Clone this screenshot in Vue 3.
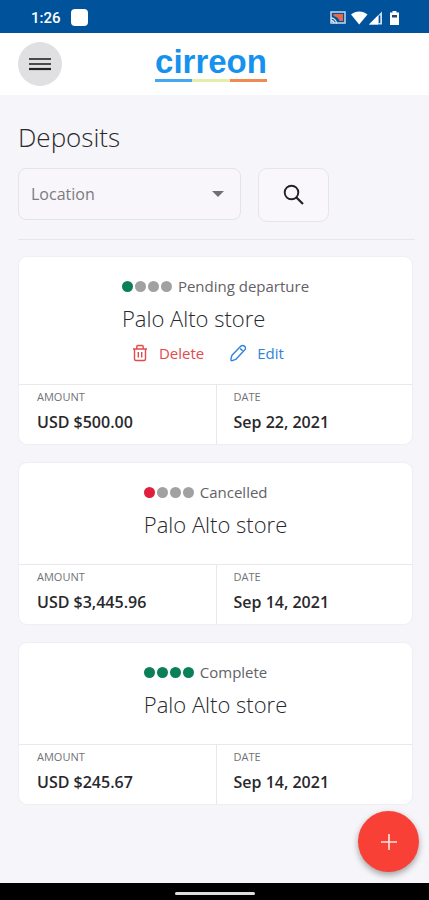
<script setup>
import { ref } from 'vue'

const location = ref('')

const deposits = [
  {
    id: 1,
    status: 'Pending departure',
    dots: ['green', 'grey', 'grey', 'grey'],
    store: 'Palo Alto store',
    editable: true,
    amount: 'USD $500.00',
    date: 'Sep 22, 2021',
  },
  {
    id: 2,
    status: 'Cancelled',
    dots: ['red', 'grey', 'grey', 'grey'],
    store: 'Palo Alto store',
    editable: false,
    amount: 'USD $3,445.96',
    date: 'Sep 14, 2021',
  },
  {
    id: 3,
    status: 'Complete',
    dots: ['green', 'green', 'green', 'green'],
    store: 'Palo Alto store',
    editable: false,
    amount: 'USD $245.67',
    date: 'Sep 14, 2021',
  },
]
</script>

<template>
  <div class="screen">
    <div class="status-bar">
      <span class="clock">1:26</span>
      <span class="notice"></span>
      <svg class="system-icons" viewBox="0 0 70 16" aria-hidden="true">
        <rect x="1" y="2" width="14" height="11" fill="none" stroke="#c9d9ea" stroke-width="1.5" />
        <path d="M3.500 4h9.500v7H9.500C9 8.500 6.500 6.500 3.500 6z" fill="#e8694a" />
        <path d="M1 8a5.500 5.500 0 0 1 5.500 5.500M1 10.500a3 3 0 0 1 3 3" fill="none" stroke="#dce8f4" stroke-width="1.300" />
        <path d="M21 4.500c4.800-4 11.500-4 16.500 0L29.200 14.500z" fill="#fff" />
        <path d="M39 14.500 52 1.500v13z" fill="#cfdfef" />
        <path d="M39 14.500 48 5.500v9z" fill="#fff" />
        <path d="M49.500 5.500v7.500" stroke="#00539b" stroke-width="1.500" />
        <path d="M62.500 1h4v1.500H69v12.500h-9V2.500h2.500z" fill="#fff" />
        <path d="M62 5h5v2.500h-5z" fill="#24457c" />
      </svg>
    </div>

    <header class="header">
      <button class="menu" type="button" aria-label="Menu">
        <svg viewBox="0 0 22 14" aria-hidden="true">
          <path d="M0 2h22M0 7h22" stroke="#4a4a4c" stroke-width="2.200" />
          <path d="M0 12h22" stroke="#222" stroke-width="2.200" />
        </svg>
      </button>
      <a class="logo" href="#">
        <span class="logo-name">cirreon</span>
        <span class="logo-line"></span>
      </a>
    </header>

    <main class="content">
      <h1 class="title">Deposits</h1>
      <form class="filters" @submit.prevent>
        <div class="picker">
          <select v-model="location" aria-label="Location">
            <option value="">Location</option>
            <option value="palo-alto">Palo Alto store</option>
          </select>
          <svg class="caret" viewBox="0 0 12 6" aria-hidden="true">
            <path d="M0 0h12L6 6z" fill="#707074" />
          </svg>
        </div>
        <button class="search" type="submit" aria-label="Search">
          <svg viewBox="0 0 22 22" aria-hidden="true">
            <circle cx="8.500" cy="8.500" r="6.800" fill="none" stroke="#222" stroke-width="1.900" />
            <path d="m13.500 13.500 6.500 6.500" stroke="#222" stroke-width="2.200" />
          </svg>
        </button>
      </form>

      <section class="list">
        <article v-for="d in deposits" :key="d.id" class="card">
          <div class="summary">
            <div>
              <p class="status">
                <span class="dots">
                  <i v-for="(c, n) in d.dots" :key="n" class="dot" :class="c"></i>
                </span>
                {{ d.status }}
              </p>
              <h2 class="store">{{ d.store }}</h2>
              <div v-if="d.editable" class="actions">
                <button class="action delete" type="button">
                  <svg viewBox="0 0 16 18" fill="none" stroke="currentColor" stroke-width="1.400" aria-hidden="true">
                    <path d="M1 5h14M4.800 4.800V2.700a1.200 1.200 0 0 1 1.200-1.200h4a1.200 1.200 0 0 1 1.200 1.200v2.100M2.500 5v10a1.500 1.500 0 0 0 1.500 1.500h8a1.500 1.500 0 0 0 1.500-1.500V5" />
                    <path d="M6.300 8v5.500M9.700 8v5.500" />
                  </svg>
                  Delete
                </button>
                <button class="action edit" type="button">
                  <svg viewBox="0 0 16 18" fill="none" stroke="currentColor" stroke-width="1.400" stroke-linejoin="round" aria-hidden="true">
                    <path d="M1.800 11.600 10.700 2.300a2.700 2.700 0 0 1 3.900 0 2.700 2.700 0 0 1 0 3.800L5.700 15.400 2.200 16.700a1 1 0 0 1-1.300-1.200z" />
                    <path d="M10 4.700a3.300 3.300 0 0 1 2.500 2.300" />
                  </svg>
                  Edit
                </button>
              </div>
            </div>
          </div>
          <dl class="facts">
            <div class="fact">
              <dt>AMOUNT</dt>
              <dd>{{ d.amount }}</dd>
            </div>
            <div class="fact">
              <dt>DATE</dt>
              <dd>{{ d.date }}</dd>
            </div>
          </dl>
        </article>
      </section>
    </main>

    <button class="add" type="button" aria-label="Add deposit">
      <svg viewBox="0 0 16 16" aria-hidden="true">
        <path d="M8 0v16M0 8h16" stroke="#ffe3df" stroke-width="1.600" />
      </svg>
    </button>
    <div class="nav-bar"><span class="handle"></span></div>
  </div>
</template>

<style>
body {
  margin: 0;
  background: #f5f5f8;
}
</style>

<style scoped>
.screen {
  display: flex;
  flex-direction: column;
  min-height: 100vh;
  background: #f6f5f9;
  color: #29292c;
  font-family: "Open Sans", "Noto Sans", sans-serif;
}
.screen * {
  box-sizing: border-box;
}
button,
select {
  font: inherit;
  color: inherit;
  cursor: pointer;
}
.status-bar {
  display: flex;
  align-items: center;
  height: 33px;
  padding: 2px 29px 0 31px;
  background: #00539b;
}
.clock {
  color: #fff;
  font-family: Roboto, sans-serif;
  font-size: 15px;
  font-weight: 500;
}
.notice {
  width: 17px;
  height: 17px;
  margin-left: 10px;
  border-radius: 4px;
  background: #fff;
}
.system-icons {
  width: 70px;
  height: 16px;
  margin-left: auto;
}
.header {
  display: grid;
  grid-template-columns: 1fr auto 1fr;
  align-items: center;
  height: 62px;
  padding: 0 25px 0 18px;
  background: #fff;
}
.menu {
  display: grid;
  place-items: center;
  width: 44px;
  height: 44px;
  padding: 0;
  border: 0;
  border-radius: 50%;
  background: #e0dfe1;
}
.menu svg {
  width: 22px;
  height: 14px;
}
.logo {
  display: block;
  color: #1692ee;
  text-decoration: none;
}
.logo-name {
  display: block;
  font-family: "Liberation Sans", Arial, sans-serif;
  font-size: 33px;
  font-weight: 700;
  line-height: 32px;
}
.logo-line {
  display: block;
  height: 3px;
  margin-top: 1px;
  background: linear-gradient(90deg, #43a9ef 0 33%, #e5edaa 33% 67%, #ef8a50 67%);
}
.content {
  padding: 26px 14px 24px 18px;
}
.title {
  margin: 0;
  font-size: 26px;
  font-weight: 300;
  line-height: 32px;
}
.filters {
  display: flex;
  align-items: flex-start;
  gap: 17px;
  margin-top: 15px;
  padding-bottom: 17px;
  border-bottom: 1px solid #e7e6ea;
}
.picker {
  position: relative;
  flex: 0 1 223px;
}
.picker select {
  width: 100%;
  height: 52px;
  padding: 0 36px 0 12px;
  border: 1px solid #e4e3e8;
  border-radius: 8px;
  appearance: none;
  background: #f8f6fa;
  color: #7b7b80;
  font-size: 16px;
}
.caret {
  position: absolute;
  top: 23px;
  right: 17px;
  width: 12px;
  height: 6px;
  pointer-events: none;
}
.search {
  display: grid;
  place-items: center;
  width: 71px;
  height: 54px;
  padding: 0;
  border: 1px solid #e7e5e9;
  border-radius: 9px;
  background: #f9f7fb;
}
.search svg {
  width: 22px;
  height: 22px;
}
.list {
  display: grid;
  gap: 19px;
  margin: 17px 3px 0 1px;
}
.card {
  overflow: hidden;
  border-radius: 8px;
  background: #fff;
  box-shadow: 0 0 2px #e2e0e6;
}
.summary {
  display: flex;
  justify-content: center;
  padding: 18px 16px;
}
.status {
  display: flex;
  align-items: center;
  gap: 6px;
  margin: 0;
  color: #626266;
  font-size: 15px;
  line-height: 22px;
}
.dots {
  display: flex;
  gap: 2px;
}
.dot {
  width: 11px;
  height: 11px;
  border-radius: 50%;
}
.green {
  background: #0b8058;
}
.grey {
  background: #a0a1a0;
}
.red {
  background: #e01f3d;
}
.store {
  margin: 7px 0 8px;
  font-size: 22px;
  font-weight: 300;
  line-height: 28px;
}
.actions {
  display: flex;
  gap: 26px;
  padding-left: 10px;
}
.action {
  display: flex;
  align-items: center;
  gap: 11px;
  height: 26px;
  padding: 0;
  border: 0;
  background: none;
  font-size: 15px;
}
.action svg {
  width: 16px;
  height: 18px;
}
.delete {
  color: #e14b4b;
}
.edit {
  color: #3182d9;
}
.facts {
  display: grid;
  grid-template-columns: 1fr 1fr;
  margin: 0;
  border-top: 1px solid #e8e7eb;
}
.fact {
  padding: 4px 16px 11px 18px;
}
.fact + .fact {
  padding-left: 17px;
  border-left: 1px solid #e8e7eb;
}
dt {
  color: #727276;
  font-size: 11px;
  line-height: 16px;
}
dd {
  margin: 6px 0 0;
  font-size: 16px;
  font-weight: 600;
  line-height: 22px;
}
.add {
  position: fixed;
  right: 10px;
  bottom: 28px;
  display: grid;
  place-items: center;
  width: 61px;
  height: 61px;
  padding: 0;
  border: 0;
  border-radius: 50%;
  background: #f84036;
  box-shadow: 0 3px 6px rgba(0, 0, 0, 0.35);
}
.add svg {
  width: 16px;
  height: 16px;
}
.nav-bar {
  display: grid;
  place-items: center;
  height: 17px;
  margin-top: auto;
  padding-top: 3px;
  background: #000;
}
.handle {
  width: 80px;
  height: 3px;
  border-radius: 2px;
  background: #dedede;
}
</style>
